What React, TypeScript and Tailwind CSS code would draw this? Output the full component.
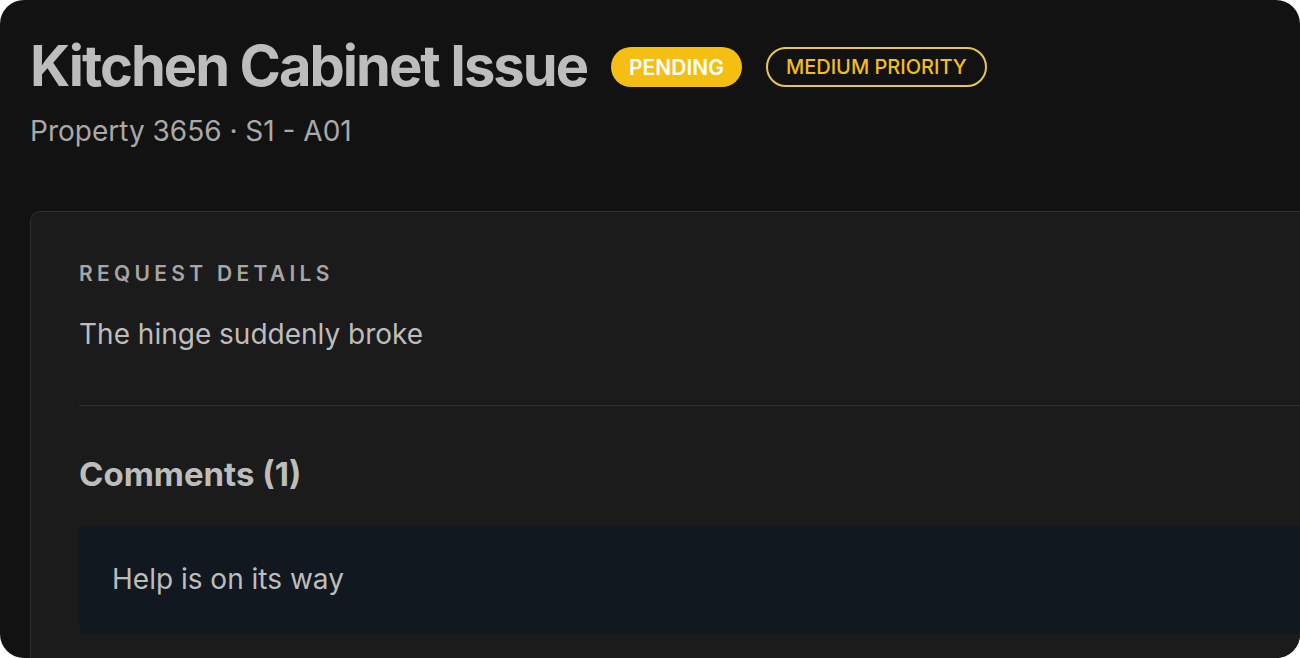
import React from "react";

const font = { fontFamily: "Inter, 'Noto Sans', sans-serif" };

function Badge({ children, variant }: { children: React.ReactNode; variant: "solid" | "outline" }) {
  if (variant === "solid") {
    return (
      <span className="inline-flex h-10 items-center rounded-full bg-[#f4be12] px-[18px] text-[21px] font-semibold leading-none text-white">
        {children}
      </span>
    );
  }
  return (
    <span className="inline-flex h-10 items-center rounded-full border-2 border-[#e9c654] px-[18px] text-[20px] font-medium leading-none text-[#f2bf1a]">
      {children}
    </span>
  );
}

export default function App() {
  return (
    <div className="h-[658px] w-[1300px] bg-white" style={font}>
      <div className="h-full w-full overflow-hidden rounded-[24px] bg-[#121212] pl-[30px] pt-[34px]">
        <header className="flex items-center gap-6">
          <h1 className="text-[56px] font-bold leading-[64px] tracking-[-0.035em] text-[#bdbdbd]">
            Kitchen Cabinet Issue
          </h1>
          <div className="flex items-center gap-6 pt-[2px]">
            <Badge variant="solid">PENDING</Badge>
            <Badge variant="outline">MEDIUM PRIORITY</Badge>
          </div>
        </header>
        <p className="mt-[14px] text-[28px] leading-[38px] text-[#a9a9a9]">Property 3656 · S1 - A01</p>

        <section className="mt-[61px] -mr-[120px] rounded-[10px] border border-[#2f2f2f] bg-[#1b1b1b] p-12">
          <h2 className="text-[21px] font-semibold leading-[28px] tracking-[0.205em] text-[#a6a6a6]">
            REQUEST DETAILS
          </h2>
          <p className="mt-[26px] text-[28px] leading-[40px] text-[#bdbdbd]">The hinge suddenly broke</p>

          <div className="mt-[51px] h-px bg-[#303030]" />

          <h3 className="mt-[48px] text-[33px] font-bold leading-[40px] text-[#bdbdbd]">Comments (1)</h3>
          <div className="mt-8 rounded-[8px] bg-[#111820] px-[33px] pb-[35px] pt-[33px]">
            <p className="text-[28px] leading-[40px] text-[#bdbdbd]">Help is on its way</p>
          </div>
        </section>
      </div>
    </div>
  );
}
